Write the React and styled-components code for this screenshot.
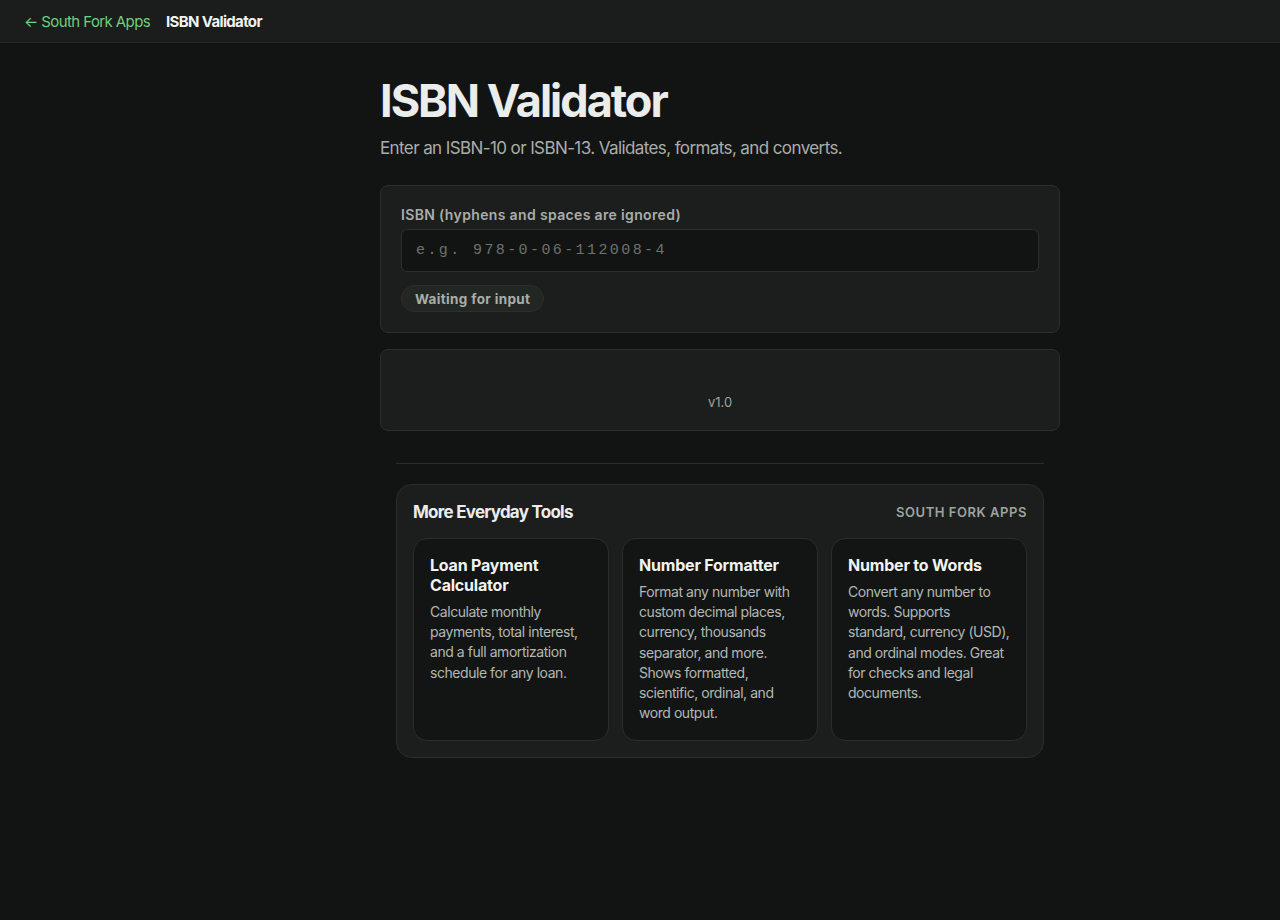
import React from "react";
import styled, { createGlobalStyle } from "styled-components";

const Global = createGlobalStyle`
  html, body { margin: 0; padding: 0; background: #121413; }
  body { font-family: Inter, "Noto Sans", sans-serif; color: #e9ebe9; }
  * { box-sizing: border-box; }
`;

const Page = styled.div`
  min-height: 920px;
  background: #121413;
`;

const TopBar = styled.header`
  height: 43px;
  display: flex;
  align-items: center;
  gap: 16px;
  padding: 0 24px;
  background: #1a1d1b;
  border-bottom: 1px solid #262a27;
`;

const BackLink = styled.a`
  color: #6fd07e;
  font-size: 15px;
  text-decoration: none;
  letter-spacing: -0.6px;
`;

const TopTitle = styled.span`
  color: #f1f3f1;
  font-size: 15px;
  font-weight: 700;
  letter-spacing: -0.65px;
`;

const Main = styled.main`
  padding: 32px 0 0 160px;
  display: flex;
  justify-content: center;
`;

const Column = styled.div`
  width: 680px;
  display: flex;
  flex-direction: column;
`;

const Title = styled.h1`
  margin: 0;
  font-size: 45px;
  line-height: 52px;
  font-weight: 700;
  letter-spacing: -2px;
  color: #ebedeb;
`;

const Subtitle = styled.p`
  margin: 9px 0 0;
  font-size: 17px;
  line-height: 24px;
  color: #a9aeaa;
  letter-spacing: -0.6px;
`;

const Card = styled.section`
  margin-top: ${(p) => p.$mt || 16}px;
  height: ${(p) => (p.$h ? `${p.$h}px` : "auto")};
  background: #1b1e1c;
  border: 1px solid #2a2e2b;
  border-radius: 8px;
  padding: 20px;
  display: flex;
  flex-direction: column;
`;

const Label = styled.label`
  font-size: 14px;
  font-weight: 600;
  color: #a9aeaa;
  letter-spacing: 0.35px;
  line-height: 18px;
`;

const Input = styled.input`
  margin-top: 5px;
  height: 43px;
  width: 100%;
  background: #121413;
  border: 1px solid #2c302d;
  border-radius: 6px;
  padding: 0 14px;
  font-family: "Liberation Mono", "DejaVu Sans Mono", monospace;
  font-size: 15px;
  letter-spacing: 2.4px;
  color: #e9ebe9;
  outline: none;
  &::placeholder { color: #6d726e; }
`;

const Badge = styled.span`
  align-self: flex-start;
  margin-top: 13px;
  height: 27px;
  display: inline-flex;
  align-items: center;
  padding: 0 13px;
  border-radius: 999px;
  background: #232724;
  border: 1px solid #2c302d;
  font-size: 13.5px;
  font-weight: 700;
  color: #a9aeaa;
  letter-spacing: 0.35px;
`;

const Version = styled.div`
  margin-top: auto;
  text-align: center;
  font-size: 13px;
  color: #9ea39f;
`;

const Divider = styled.hr`
  margin: 32px 16px 0;
  border: none;
  border-top: 1px solid #2a2e2b;
`;

const More = styled.section`
  margin: 20px 16px 0;
  background: #1b1e1c;
  border: 1px solid #2a2e2b;
  border-radius: 16px;
  padding: 16px;
`;

const MoreHead = styled.div`
  display: flex;
  justify-content: space-between;
  align-items: center;
  height: 22px;
`;

const MoreTitle = styled.h2`
  margin: 0;
  font-size: 17px;
  font-weight: 700;
  letter-spacing: -0.75px;
  color: #ebedeb;
`;

const Brand = styled.span`
  font-size: 13px;
  font-weight: 600;
  letter-spacing: 0.55px;
  color: #9ea39f;
`;

const Grid = styled.div`
  margin-top: 15px;
  display: grid;
  grid-template-columns: repeat(3, 1fr);
  gap: 13px;
`;

const ToolCard = styled.a`
  background: #121513;
  border: 1px solid #2a2e2b;
  border-radius: 14px;
  padding: 16px 16px 17px;
  text-decoration: none;
  display: flex;
  flex-direction: column;
`;

const ToolName = styled.h3`
  margin: 0;
  font-size: 16px;
  line-height: 20px;
  font-weight: 700;
  letter-spacing: -0.2px;
  color: #f1f3f1;
`;

const ToolDesc = styled.p`
  margin: 7px 0 0;
  font-size: 14px;
  line-height: 20.2px;
  color: #b3b8b4;
  letter-spacing: -0.45px;
`;

const tools = [
  {
    name: "Loan Payment Calculator",
    desc: "Calculate monthly payments, total interest, and a full amortization schedule for any loan.",
  },
  {
    name: "Number Formatter",
    desc: "Format any number with custom decimal places, currency, thousands separator, and more. Shows formatted, scientific, ordinal, and word output.",
  },
  {
    name: "Number to Words",
    desc: "Convert any number to words. Supports standard, currency (USD), and ordinal modes. Great for checks and legal documents.",
  },
];

export default function App() {
  return (
    <Page>
      <Global />
      <TopBar>
        <BackLink href="#">← South Fork Apps</BackLink>
        <TopTitle>ISBN Validator</TopTitle>
      </TopBar>
      <Main>
        <Column>
          <Title>ISBN Validator</Title>
          <Subtitle>Enter an ISBN-10 or ISBN-13. Validates, formats, and converts.</Subtitle>
          <Card $mt={25}>
            <Label htmlFor="isbn">ISBN (hyphens and spaces are ignored)</Label>
            <Input id="isbn" placeholder="e.g. 978-0-06-112008-4" />
            <Badge>Waiting for input</Badge>
          </Card>
          <Card $mt={16} $h={82}>
            <Version>v1.0</Version>
          </Card>
          <Divider />
          <More>
            <MoreHead>
              <MoreTitle>More Everyday Tools</MoreTitle>
              <Brand>SOUTH FORK APPS</Brand>
            </MoreHead>
            <Grid>
              {tools.map((t) => (
                <ToolCard key={t.name} href="#">
                  <ToolName>{t.name}</ToolName>
                  <ToolDesc>{t.desc}</ToolDesc>
                </ToolCard>
              ))}
            </Grid>
          </More>
        </Column>
      </Main>
    </Page>
  );
}
